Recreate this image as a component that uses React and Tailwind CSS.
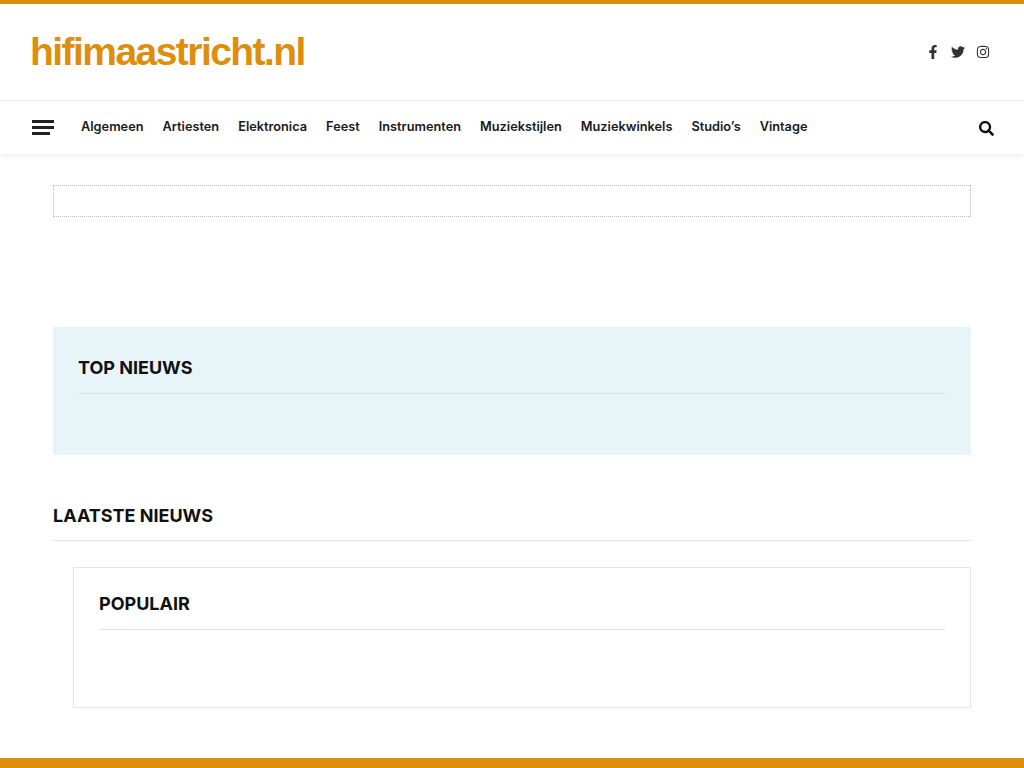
import React from 'react';
import { FaFacebookF, FaTwitter, FaInstagram, FaSearch } from 'react-icons/fa';

const NAV_ITEMS = ['Algemeen', 'Artiesten', 'Elektronica', 'Feest', 'Instrumenten', 'Muziekstijlen', 'Muziekwinkels', 'Studio’s', 'Vintage'];

function Heading({ children, className = 'pb-[13px]' }) {
  return (
    <div className={`border-b border-[#e0e0e0] ${className}`}>
      <h2 className="font-['Inter',sans-serif] text-[18px] leading-[24px] font-bold text-[#111111]">{children}</h2>
    </div>
  );
}

export default function App() {
  return (
    <div className="flex h-[768px] flex-col overflow-hidden border-t-4 border-[#dd8e0d] bg-white">
      <header className="flex h-[96px] shrink-0 items-center justify-between pl-[30px] pr-[34px]">
        <a className="font-['Liberation_Sans',sans-serif] text-[39px] leading-[40px] font-bold tracking-[-1.55px] text-[#dd8e0d]">hifimaastricht.nl</a>
        <div className="flex items-center gap-[11px] text-[#333333]">
          <FaFacebookF size={14} />
          <FaTwitter size={14} />
          <FaInstagram size={14} />
        </div>
      </header>

      <nav className="flex h-[54px] shrink-0 items-center justify-between border-t border-[#ebebeb] bg-white pl-[32px] pr-[30px] shadow-[0_2px_6px_rgba(0,0,0,0.08)]">
        <div className="flex items-center">
          <div className="mr-[27px] flex w-[22px] flex-col gap-[3px]">
            <span className="h-[3px] w-[22px] bg-[#222222]"></span>
            <span className="h-[3px] w-[22px] bg-[#222222]"></span>
            <span className="h-[3px] w-[18px] bg-[#222222]"></span>
          </div>
          <ul className="flex items-center gap-[19px] pb-[2px] font-['Inter',sans-serif] text-[12.75px] leading-[18px] font-semibold text-[#1a1a1a]">
            {NAV_ITEMS.map(item => (
              <li key={item}>{item}</li>
            ))}
          </ul>
        </div>
        <FaSearch size={15} className="mt-[2px] text-[#111111]" />
      </nav>

      <main className="mx-[53px] flex flex-1 flex-col">
        <div className="mt-[31px] h-[32px] border border-dotted border-[#bbbbbb]"></div>

        <section className="mt-[110px] h-[128px] bg-[#e7f5f9] px-[25px] pt-[29px]">
          <Heading>TOP NIEUWS</Heading>
        </section>

        <section className="mt-[49px]">
          <Heading className="pb-[12px]">LAATSTE NIEUWS</Heading>
        </section>

        <section className="mt-[26px] ml-[20px] h-[141px] border border-[#e5e5e5] px-[25px] pt-[24px]">
          <Heading>POPULAIR</Heading>
        </section>
      </main>

      <div className="h-[10px] shrink-0 bg-[#dd8e0d]"></div>
    </div>
  );
}
